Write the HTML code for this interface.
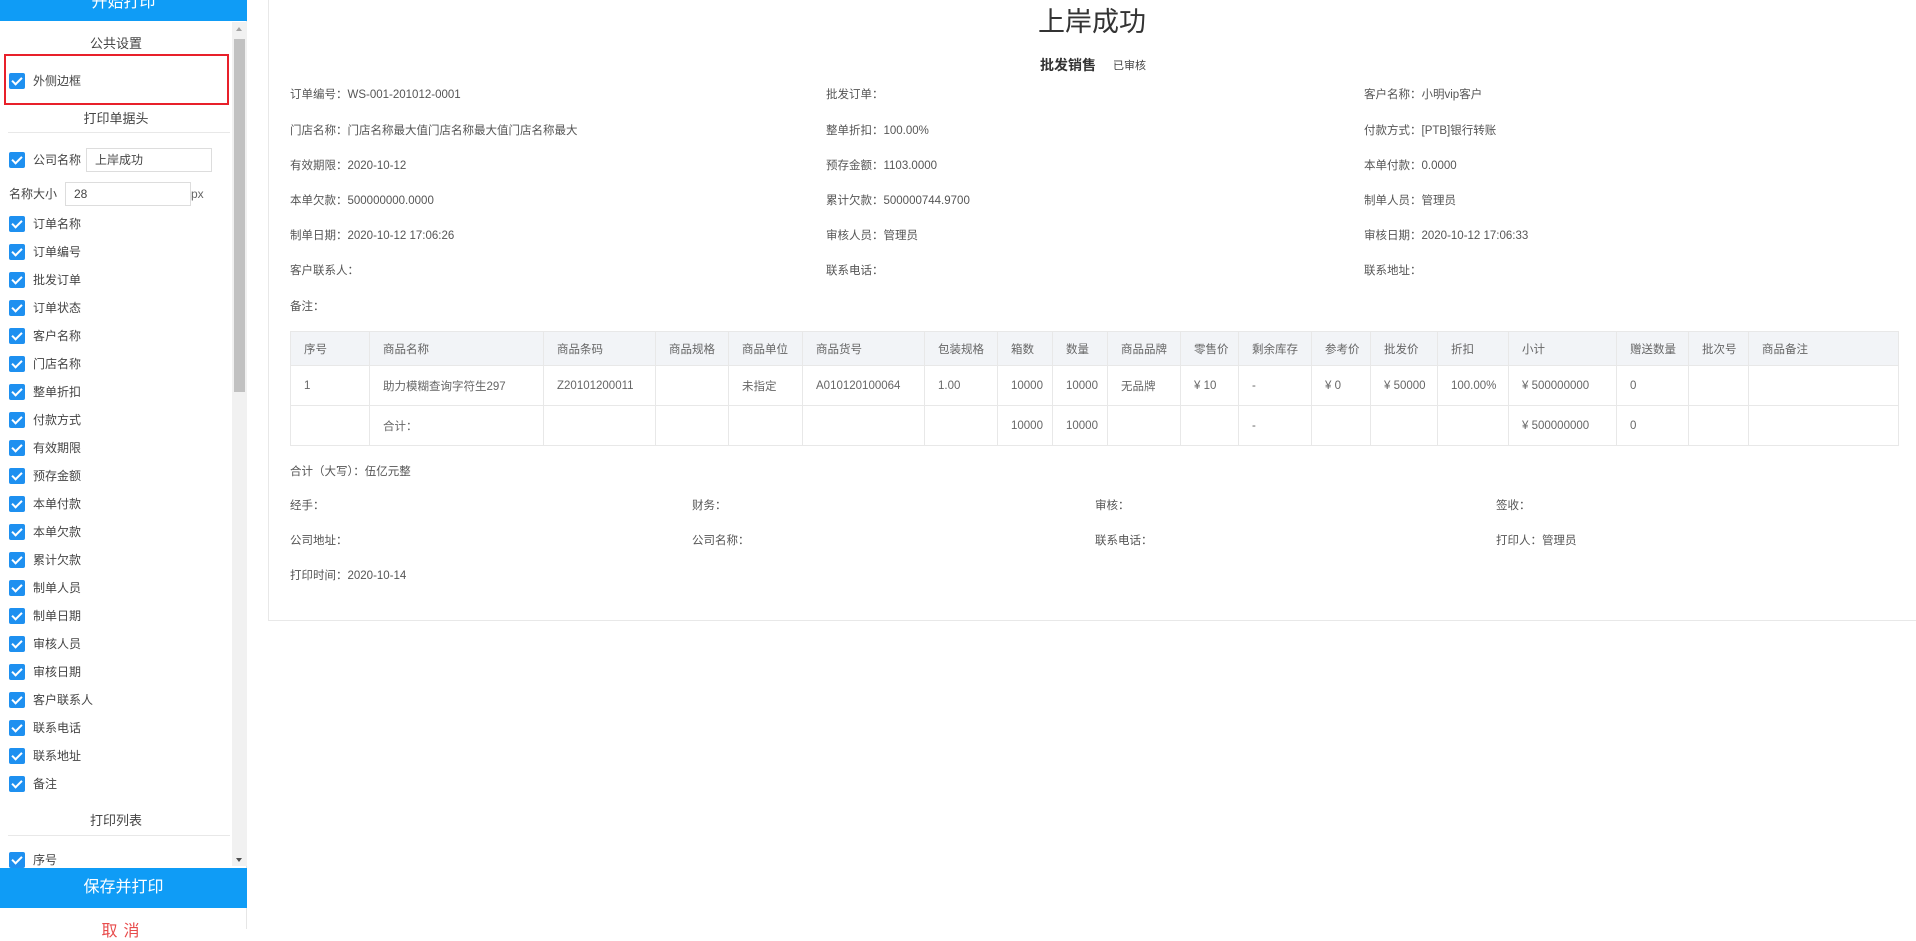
<!DOCTYPE html>
<html><head><meta charset="utf-8"><style>
*{margin:0;padding:0;box-sizing:border-box}
body{width:1916px;height:929px;overflow:hidden;background:#fff;font-family:"Liberation Sans","Noto Sans CJK SC",sans-serif;color:#333;position:relative}
.a{position:absolute;white-space:nowrap}
.sb{position:absolute;left:0;top:0;width:247px;height:929px;border-right:1px solid #e6e6e6;background:#fff}
.btn{position:absolute;left:0;width:247px;background:#0f9cf6;color:#fff;font-size:16px;text-align:center}
.cb{position:absolute;left:9px;width:16px;height:16px;background:#1e90f0;border-radius:2px}
.cb:after{content:"";position:absolute;left:5px;top:2px;width:4px;height:8px;border:solid #fff;border-width:0 2px 2px 0;transform:rotate(45deg)}
.lb{position:absolute;left:33px;font-size:12px;line-height:16px;color:#444}
.sec{position:absolute;left:0;width:232px;text-align:center;font-size:13px;color:#444}
.inp{position:absolute;height:24px;border:1px solid #ddd;font-size:12px;line-height:22px;padding-left:8px;color:#444}
.t{font-size:11.5px;color:#555;position:absolute;white-space:nowrap;line-height:14px}
table{position:absolute;left:290px;top:331px;border-collapse:collapse;font-size:11.5px;color:#666;table-layout:fixed}
td{border:1px solid #e8e8e8;padding-left:13px;white-space:nowrap;overflow:hidden}
tr.h td{background:#f2f4f7;height:34px}
tr.r td{height:40px}
</style></head><body>
<div class="sb">
 <div class="btn" style="top:0;height:21px;line-height:6px">开始打印</div>
 <div class="a" style="left:232px;top:22px;width:15px;height:844px;background:#f1f1f1"></div>
 <div class="a" style="left:234px;top:39px;width:11px;height:353px;background:#c1c1c1"></div>
 <div class="a" style="left:236px;top:27px;border:3.5px solid transparent;border-bottom:4px solid #a3a3a3;border-top:0"></div>
 <div class="a" style="left:236px;top:858px;border:3.5px solid transparent;border-top:4px solid #505050;border-bottom:0"></div>
 <div class="sec" style="top:33px">公共设置</div>
 <div class="a" style="left:4px;top:54px;width:225px;height:51px;border:2px solid #e8202a"></div>
 <div class="cb" style="top:73px"></div><div class="lb" style="top:73px">外侧边框</div>
 <div class="sec" style="top:108px">打印单据头</div>
 <div class="a" style="left:8px;top:132px;width:222px;height:1px;background:#e8e8e8"></div>
 <div class="cb" style="top:152px"></div><div class="lb" style="top:152px">公司名称</div>
 <div class="inp" style="left:86px;top:148px;width:126px">上岸成功</div>
 <div class="lb" style="left:9px;top:186px">名称大小</div>
 <div class="inp" style="left:65px;top:182px;width:126px">28</div>
 <div class="lb" style="left:191px;top:186px;color:#666">px</div>
 <div class="sec" style="top:810px">打印列表</div>
 <div class="a" style="left:8px;top:835px;width:222px;height:1px;background:#e8e8e8"></div>
 <div class="cb" style="top:852px"></div><div class="lb" style="top:852px">序号</div>
 <div class="btn" style="top:868px;height:40px;line-height:40px">保存并打印</div>
 <div class="a" style="left:0;width:247px;top:917px;text-align:center;color:#e84b4b;font-size:16px;letter-spacing:6px">取消</div>
</div>
<div class="a" style="left:268px;top:-1px;width:1660px;height:622px;border:1px solid #e8e8e8"></div>
<div class="a" style="left:1038px;top:5px;font-size:27px;color:#333;line-height:34px">上岸成功</div>
<div class="a" style="left:1040px;top:56px;font-size:14px;font-weight:bold;color:#333;line-height:18px">批发销售</div>
<div class="a" style="left:1113px;top:59px;font-size:11px;color:#444;line-height:14px">已审核</div>

<div class="t" style="left:290px;top:88px">订单编号：WS-001-201012-0001</div>
<div class="t" style="left:826px;top:88px">批发订单：</div>
<div class="t" style="left:1364px;top:88px">客户名称：小明vip客户</div>
<div class="t" style="left:290px;top:124px">门店名称：门店名称最大值门店名称最大值门店名称最大</div>
<div class="t" style="left:826px;top:124px">整单折扣：100.00%</div>
<div class="t" style="left:1364px;top:124px">付款方式：[PTB]银行转账</div>
<div class="t" style="left:290px;top:159px">有效期限：2020-10-12</div>
<div class="t" style="left:826px;top:159px">预存金额：1103.0000</div>
<div class="t" style="left:1364px;top:159px">本单付款：0.0000</div>
<div class="t" style="left:290px;top:194px">本单欠款：500000000.0000</div>
<div class="t" style="left:826px;top:194px">累计欠款：500000744.9700</div>
<div class="t" style="left:1364px;top:194px">制单人员：管理员</div>
<div class="t" style="left:290px;top:229px">制单日期：2020-10-12 17:06:26</div>
<div class="t" style="left:826px;top:229px">审核人员：管理员</div>
<div class="t" style="left:1364px;top:229px">审核日期：2020-10-12 17:06:33</div>
<div class="t" style="left:290px;top:264px">客户联系人：</div>
<div class="t" style="left:826px;top:264px">联系电话：</div>
<div class="t" style="left:1364px;top:264px">联系地址：</div>
<div class="t" style="left:290px;top:300px">备注：</div>

<table>
<colgroup><col style="width:79px"><col style="width:174px"><col style="width:112px"><col style="width:73px"><col style="width:74px"><col style="width:122px"><col style="width:73px"><col style="width:55px"><col style="width:55px"><col style="width:73px"><col style="width:58px"><col style="width:73px"><col style="width:59px"><col style="width:67px"><col style="width:71px"><col style="width:108px"><col style="width:72px"><col style="width:60px"><col style="width:150px"></colgroup>
<tr class="h"><td>序号</td><td>商品名称</td><td>商品条码</td><td>商品规格</td><td>商品单位</td><td>商品货号</td><td>包装规格</td><td>箱数</td><td>数量</td><td>商品品牌</td><td>零售价</td><td>剩余库存</td><td>参考价</td><td>批发价</td><td>折扣</td><td>小计</td><td>赠送数量</td><td>批次号</td><td>商品备注</td></tr>
<tr class="r"><td>1</td><td>助力模糊查询字符生297</td><td>Z20101200011</td><td></td><td>未指定</td><td>A010120100064</td><td>1.00</td><td>10000</td><td>10000</td><td>无品牌</td><td>¥ 10</td><td>-</td><td>¥ 0</td><td>¥ 50000</td><td>100.00%</td><td>¥ 500000000</td><td>0</td><td></td><td></td></tr>
<tr class="r"><td></td><td>合计：</td><td></td><td></td><td></td><td></td><td></td><td>10000</td><td>10000</td><td></td><td></td><td>-</td><td></td><td></td><td></td><td>¥ 500000000</td><td>0</td><td></td><td></td></tr>
</table>

<div class="t" style="left:290px;top:465px">合计（大写）：伍亿元整</div>
<div class="t" style="left:290px;top:499px">经手：</div>
<div class="t" style="left:692px;top:499px">财务：</div>
<div class="t" style="left:1095px;top:499px">审核：</div>
<div class="t" style="left:1496px;top:499px">签收：</div>
<div class="t" style="left:290px;top:534px">公司地址：</div>
<div class="t" style="left:692px;top:534px">公司名称：</div>
<div class="t" style="left:1095px;top:534px">联系电话：</div>
<div class="t" style="left:1496px;top:534px">打印人：管理员</div>
<div class="t" style="left:290px;top:569px">打印时间：2020-10-14</div>

<div class="sb" style="background:transparent;border:0;pointer-events:none">
<div class="cb" style="top:216px"></div><div class="lb" style="top:216px">订单名称</div>
<div class="cb" style="top:244px"></div><div class="lb" style="top:244px">订单编号</div>
<div class="cb" style="top:272px"></div><div class="lb" style="top:272px">批发订单</div>
<div class="cb" style="top:300px"></div><div class="lb" style="top:300px">订单状态</div>
<div class="cb" style="top:328px"></div><div class="lb" style="top:328px">客户名称</div>
<div class="cb" style="top:356px"></div><div class="lb" style="top:356px">门店名称</div>
<div class="cb" style="top:384px"></div><div class="lb" style="top:384px">整单折扣</div>
<div class="cb" style="top:412px"></div><div class="lb" style="top:412px">付款方式</div>
<div class="cb" style="top:440px"></div><div class="lb" style="top:440px">有效期限</div>
<div class="cb" style="top:468px"></div><div class="lb" style="top:468px">预存金额</div>
<div class="cb" style="top:496px"></div><div class="lb" style="top:496px">本单付款</div>
<div class="cb" style="top:524px"></div><div class="lb" style="top:524px">本单欠款</div>
<div class="cb" style="top:552px"></div><div class="lb" style="top:552px">累计欠款</div>
<div class="cb" style="top:580px"></div><div class="lb" style="top:580px">制单人员</div>
<div class="cb" style="top:608px"></div><div class="lb" style="top:608px">制单日期</div>
<div class="cb" style="top:636px"></div><div class="lb" style="top:636px">审核人员</div>
<div class="cb" style="top:664px"></div><div class="lb" style="top:664px">审核日期</div>
<div class="cb" style="top:692px"></div><div class="lb" style="top:692px">客户联系人</div>
<div class="cb" style="top:720px"></div><div class="lb" style="top:720px">联系电话</div>
<div class="cb" style="top:748px"></div><div class="lb" style="top:748px">联系地址</div>
<div class="cb" style="top:776px"></div><div class="lb" style="top:776px">备注</div>
</div>
</body></html>
